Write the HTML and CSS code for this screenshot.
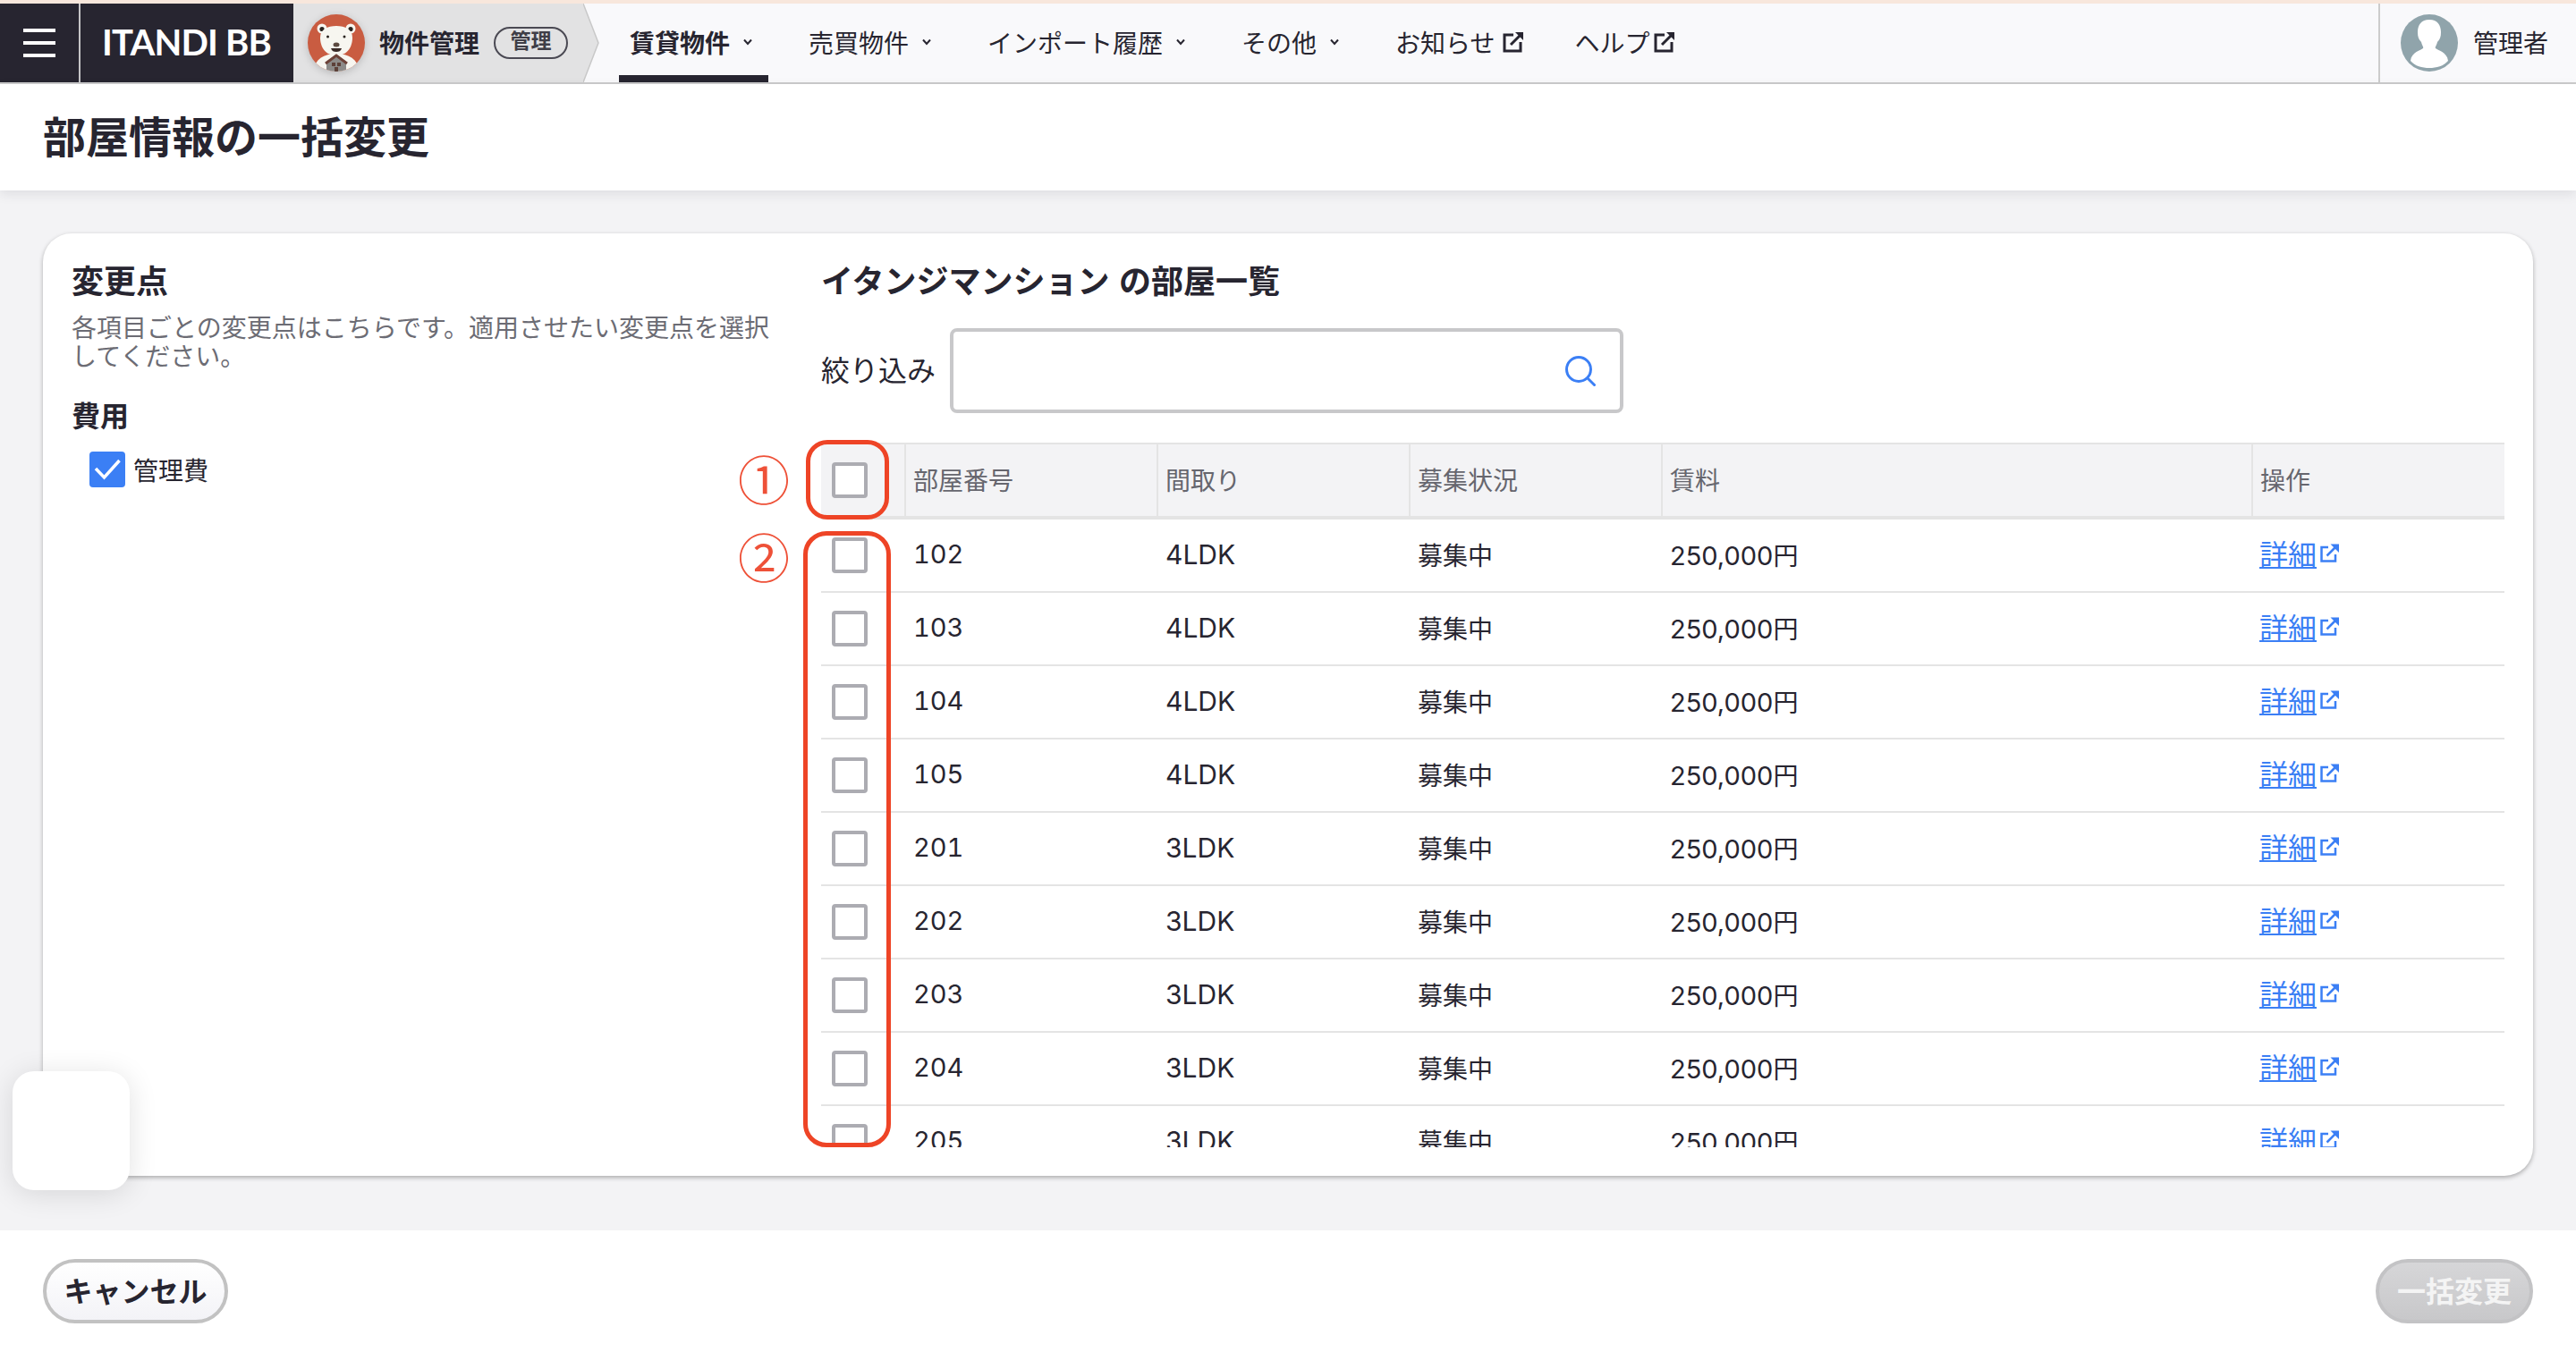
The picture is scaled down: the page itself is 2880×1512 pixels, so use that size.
FILE: index.html
```html
<!DOCTYPE html>
<html lang="ja">
<head>
<meta charset="utf-8">
<title>部屋情報の一括変更</title>
<link rel="stylesheet" href="styles.css">
</head>
<body>
<header class="topbar">
  <div class="brand">
    <button class="menu-btn" aria-label="menu"><span></span><span></span><span></span></button>
    <div class="logo">ITANDI BB</div>
  </div>
  <div class="product">
    <svg class="bear" viewBox="0 0 64 64">
      <defs><clipPath id="bc"><circle cx="32" cy="32" r="32"/></clipPath></defs>
      <g clip-path="url(#bc)">
        <rect width="64" height="64" fill="#c95c41"/>
        <path d="M6 64 C8 50 18 44 32 44 C46 44 56 50 58 64Z" fill="#f7f6f0"/>
        <circle cx="16" cy="16" r="5.5" fill="#f7f6f0"/>
        <circle cx="48" cy="16" r="5.5" fill="#f7f6f0"/>
        <circle cx="16" cy="16.500" r="2.600" fill="#2a2420"/>
        <circle cx="48" cy="16.500" r="2.600" fill="#2a2420"/>
        <path d="M14 26 C14 17 22 13 32 13 C42 13 50 17 50 26 C50 36 45 46 32 46 C19 46 14 36 14 26Z" fill="#f7f6f0"/>
        <circle cx="22.500" cy="25" r="1.500" fill="#2a2420"/>
        <circle cx="41" cy="25" r="1.500" fill="#2a2420"/>
        <ellipse cx="32" cy="34" rx="3.500" ry="2.500" fill="#5c4a40"/>
        <path d="M26 38 H38 C37 41 35 42 32 42 C29 42 27 41 26 38Z" fill="#3a2a26"/>
        <path d="M21 53 L32 45 L43 53 V64 H21Z" fill="#8c8a88"/>
        <path d="M20 55 L32 46 L44 55" fill="none" stroke="#6d4238" stroke-width="3"/>
        <rect x="27" y="54" width="4" height="4" fill="#5c4038"/>
        <rect x="33" y="54" width="4" height="4" fill="#5c4038"/>
        <rect x="30" y="59" width="4" height="5" fill="#5c4038"/>
      </g>
    </svg>
    <span class="product-name">物件管理</span>
    <span class="role-badge">管理</span>
    <svg class="product-tip" viewBox="0 0 18 88" preserveAspectRatio="none"><path d="M0 0 L17 44 L0 88Z" fill="#e2e2e3"/><path d="M0 0 L17 44 L0 88" fill="none" stroke="#c8c8c8" stroke-width="1.500"/></svg>
  </div>
  <nav class="nav">
    <a class="nav-item active">賃貸物件<svg class="caret" viewBox="0 0 10 8"><path d="M1 1.500 L5 6 L9 1.500" fill="none" stroke="currentColor" stroke-width="2"/></svg></a>
    <a class="nav-item">売買物件<svg class="caret" viewBox="0 0 10 8"><path d="M1 1.500 L5 6 L9 1.500" fill="none" stroke="currentColor" stroke-width="2"/></svg></a>
    <a class="nav-item">インポート履歴<svg class="caret" viewBox="0 0 10 8"><path d="M1 1.500 L5 6 L9 1.500" fill="none" stroke="currentColor" stroke-width="2"/></svg></a>
    <a class="nav-item">その他<svg class="caret" viewBox="0 0 10 8"><path d="M1 1.500 L5 6 L9 1.500" fill="none" stroke="currentColor" stroke-width="2"/></svg></a>
    <a class="nav-item">お知らせ<svg class="ext-nav" viewBox="0 0 24 24"><path d="M12 4 H2 V22 H20 V12" fill="none" stroke="currentColor" stroke-width="3"/><path d="M9 15 L20 4" fill="none" stroke="currentColor" stroke-width="3"/><path d="M14 1 H23 V10Z" fill="currentColor"/></svg></a>
    <a class="nav-item nav-help">ヘルプ<svg class="ext-nav" viewBox="0 0 24 24"><path d="M12 4 H2 V22 H20 V12" fill="none" stroke="currentColor" stroke-width="3"/><path d="M9 15 L20 4" fill="none" stroke="currentColor" stroke-width="3"/><path d="M14 1 H23 V10Z" fill="currentColor"/></svg></a>
  </nav>
  <div class="user">
    <svg class="avatar" viewBox="0 0 64 64">
      <defs><clipPath id="ac"><circle cx="32" cy="32" r="32"/></clipPath></defs>
      <g clip-path="url(#ac)">
        <rect width="64" height="64" fill="#90a4ab"/>
        <path d="M32 6 C23 6 19 12 19 20 C19 25 20 28 23 31 C24 35 26 37 25 38 C23 40 12 42 11 52 C16 58 24 60 32 60 C40 60 48 58 53 52 C52 42 41 40 39 38 C38 37 40 35 41 31 C44 28 45 25 45 20 C45 12 41 6 32 6Z" fill="#fff"/>
      </g>
    </svg>
    <span class="user-name">管理者</span>
  </div>
</header>

<section class="page-title"><h1>部屋情報の一括変更</h1></section>

<main class="main">
  <div class="card">
    <aside class="changes">
      <h2 class="heading">変更点</h2>
      <p class="desc">各項目ごとの変更点はこちらです。適用させたい変更点を選択してください。</p>
      <h3 class="group">費用</h3>
      <label class="option">
        <span class="check-on"><svg viewBox="0 0 40 40"><path d="M7 19 L16.500 29 L33.500 10" fill="none" stroke="#fff" stroke-width="3.500"/></svg></span>
        管理費
      </label>
    </aside>
    <section class="rooms">
      <h2 class="heading">イタンジマンション の部屋一覧</h2>
      <div class="filter">
        <span class="filter-label">絞り込み</span>
        <div class="search">
          <svg class="search-icon" viewBox="0 0 34 34"><circle cx="15" cy="15" r="13.500" fill="none" stroke="#3b7ff5" stroke-width="3"/><path d="M25 25 L32.500 32.500" stroke="#3b7ff5" stroke-width="3" stroke-linecap="round"/></svg>
        </div>
      </div>
      <div class="table-area">
        <div class="table-scroll">
          <table class="table">
            <colgroup><col class="c0"><col class="c1"><col class="c1"><col class="c1"><col class="c4"><col class="c5"></colgroup>
            <thead>
              <tr><th class="cb"><span class="box"></span></th><th>部屋番号</th><th>間取り</th><th>募集状況</th><th>賃料</th><th>操作</th></tr>
            </thead>
            <tbody id="rows"></tbody>
          </table>
        </div>
        <span class="mark mark-1">①</span>
        <span class="mark mark-2">②</span>
        <span class="outline outline-1"></span>
        <span class="outline outline-2"></span>
      </div>
    </section>
  </div>
</main>

<footer class="footer">
  <button class="btn btn-cancel">キャンセル</button>
  <button class="btn btn-submit" disabled>一括変更</button>
</footer>

<div class="floating"></div>

<script src="app.js"></script>
</body>
</html>
```

FILE: app.js
```js
var rooms = [
  ["102", "4LDK"], ["103", "4LDK"], ["104", "4LDK"], ["105", "4LDK"],
  ["201", "3LDK"], ["202", "3LDK"], ["203", "3LDK"], ["204", "3LDK"], ["205", "3LDK"]
];
var icon = '<svg class="ext-link" viewBox="0 0 21 21"><path d="M9 4 H1.500 V19.500 H17 V12" fill="none" stroke="currentColor" stroke-width="2.500"/><path d="M7.500 13.500 L16.500 4.500" fill="none" stroke="currentColor" stroke-width="2.500"/><path d="M11.500 0.500 H21 V10Z" fill="currentColor"/></svg>';
document.getElementById("rows").innerHTML = rooms.map(function (r) {
  return '<tr><td class="cb"><span class="box"></span></td><td class="text"><span class="room">' + r[0] + '</span></td><td class="text"><span class="latin">' + r[1] +
    '</span></td><td class="text">募集中</td><td class="text"><span class="rent">250,000</span>円</td><td class="link-cell"><a class="detail"><span class="detail-text">詳細</span>' + icon + '</a></td></tr>';
}).join("");
```

FILE: styles.css
```css
* { box-sizing: border-box; }
html, body { margin: 0; padding: 0; }
body {
  width: 2880px;
  height: 1512px;
  overflow: hidden;
  position: relative;
  display: flex;
  flex-direction: column;
  background: #fff;
  color: #272530;
  font-family: Inter, "Noto Sans CJK JP", sans-serif;
  font-size: 28px;
}
h1, h2, h3, p { margin: 0; }

/* top bar */
.topbar {
  flex: none;
  height: 94px;
  display: flex;
  background: #f9f9fb;
  border-top: 4px solid #f8e7dc;
  border-bottom: 2px solid #cccccc;
}
.brand {
  width: 328px;
  display: flex;
  background: #272530;
  color: #fff;
}
.menu-btn {
  width: 90px;
  padding: 0 0 0 26px;
  border: 0;
  border-right: 2px solid #c4c4c6;
  background: none;
  display: flex;
  flex-direction: column;
  justify-content: center;
  gap: 10px;
}
.menu-btn span { display: block; width: 36px; height: 4px; background: #fff; }
.logo {
  padding-left: 24px;
  font-family: Lato, sans-serif;
  font-size: 40px;
  font-weight: 700;
  line-height: 86px;
  letter-spacing: -0.8px;
  white-space: nowrap;
}
.product {
  width: 324px;
  position: relative;
  display: flex;
  align-items: center;
  padding-left: 16px;
  background: #e2e2e3;
}
.bear { width: 64px; height: 64px; flex: none; filter: drop-shadow(0 2px 4px rgba(0,0,0,.18)); }
.product-name { margin-left: 16px; font-weight: 700; white-space: nowrap; padding-bottom: 2px; }
.role-badge {
  margin-left: 16px;
  width: 83px;
  height: 36px;
  border: 2px solid #4a4953;
  border-radius: 18px;
  font-size: 23px;
  font-weight: 700;
  line-height: 29px;
  text-align: center;
  color: #3f3e47;
  white-space: nowrap;
}
.product-tip { position: absolute; left: 100%; top: 0; width: 18px; height: 88px; }
.nav {
  flex: 1;
  display: flex;
  padding-left: 40px;
}
.nav-item {
  display: flex;
  align-items: center;
  height: 88px;
  padding: 0 12px 2px;
  margin-right: 33px;
  white-space: nowrap;
}
.nav-item.active { font-weight: 700; border-bottom: 8px solid #272530; padding-top: 6px; padding-bottom: 0; }
.caret { width: 10px; height: 8px; margin-left: 15px; margin-right: 6px; }
.ext-nav { width: 24px; height: 24px; margin-left: 8px; }
.nav-help .ext-nav { margin-left: 4px; }
.user {
  width: 221px;
  display: flex;
  align-items: center;
  padding-left: 23px;
  border-left: 2px solid #cccccc;
}
.avatar { width: 64px; height: 64px; flex: none; }
.user-name { margin-left: 17px; white-space: nowrap; padding-bottom: 2px; }

/* title */
.page-title {
  flex: none;
  height: 119px;
  padding: 0 0 0 48px;
  display: flex;
  align-items: center;
  background: #fff;
  box-shadow: 0 4px 12px rgba(40,40,60,.1);
  position: relative;
  z-index: 1;
}
.page-title h1 { font-size: 48px; font-weight: 700; line-height: 64px; }

/* main */
.main {
  flex: 1;
  min-height: 0;
  padding: 48px 48px 61px;
  background: #f3f3f5;
}
.card {
  height: 100%;
  display: flex;
  gap: 38px;
  padding: 34px 32px 0;
  background: #fff;
  border-radius: 32px;
  box-shadow: 0 2px 5px rgba(0,0,0,.3);
}
.changes { width: 800px; flex: none; }
.rooms { flex: 1; min-width: 0; }
.heading { font-size: 36px; font-weight: 700; line-height: 40px; white-space: nowrap; word-spacing: 2px; }
.desc { margin-top: 16px; color: #6c6c74; line-height: 32px; }
.group { margin-top: 31px; font-size: 32px; font-weight: 700; line-height: 40px; }
.option { display: flex; align-items: center; gap: 9px; margin: 19px 0 0 20px; height: 40px; white-space: nowrap; }
.check-on { width: 40px; height: 40px; border-radius: 4px; background: #3b7ff5; }
.check-on svg { display: block; width: 40px; height: 40px; }

/* filter */
.filter { display: flex; align-items: center; gap: 16px; margin-top: 32px; }
.filter-label { font-size: 32px; white-space: nowrap; padding-bottom: 5px; }
.search {
  width: 753px;
  height: 95px;
  display: flex;
  align-items: center;
  justify-content: flex-end;
  padding-right: 27px;
  border: 4px solid #c8c8ca;
  border-radius: 8px;
  background: #fff;
}
.search-icon { width: 34px; height: 34px; }

/* table */
.table-area { position: relative; margin-top: 33px; }
.table-scroll { height: 788px; overflow: hidden; }
.table { width: 1882px; border-collapse: separate; border-spacing: 0; table-layout: fixed; }
.c0 { width: 93px; }
.c1 { width: 282px; }
.c4 { width: 660px; }
.c5 { width: 283px; }
.table th {
  height: 86px;
  padding: 0 0 2px 8px;
  background: #f3f3f5;
  border-top: 2px solid #e4e4e4;
  border-bottom: 4px solid #e4e4e4;
  border-left: 2px solid #e4e4e4;
  color: #66666e;
  font-weight: 400;
  text-align: left;
}
.table th.cb { border-left: 0; }
.table td {
  height: 82px;
  padding: 0 0 0 10px;
  border-bottom: 2px solid #e4e4e4;
}
.table td.text { padding-bottom: 3px; }
.table td.link-cell { padding-left: 9px; }
.latin { font-size: 30px; }
.room { font-size: 29px; font-variant-numeric: tabular-nums; }
.rent { font-size: 29px; }
.table th.cb, .table td.cb { padding: 0 0 0 12px; }
.box {
  display: block;
  width: 40px;
  height: 40px;
  border: 4px solid #acacb2;
  border-radius: 4px;
  background: #fff;
}
.detail { display: inline-flex; align-items: center; color: #3b7ff5; font-size: 32px; line-height: 40px; }
.detail-text { text-decoration: underline; text-decoration-thickness: 2px; text-underline-offset: 2px; }
.ext-link { width: 21px; height: 21px; margin: -5px 0 0 4px; }

/* annotations */
.outline { position: absolute; border: 5px solid #ee4426; pointer-events: none; }
.outline-1 { left: -17px; top: -3px; width: 93px; height: 89px; border-radius: 24px; }
.outline-2 { left: -20px; top: 99px; width: 98px; height: 689px; border-radius: 26px; }
.mark { position: absolute; left: -94px; width: 60px; text-align: center; color: #ee5138; font-size: 58px; line-height: 60px; font-weight: 400; font-family: "Noto Sans CJK JP", sans-serif; }
.mark-1 { top: 9px; }
.mark-2 { top: 96px; }

/* footer */
.footer {
  flex: none;
  height: 136px;
  padding: 32px 48px;
  display: flex;
  justify-content: space-between;
  background: #fff;
}
.btn {
  height: 72px;
  border-radius: 36px;
  font-family: inherit;
  font-size: 32px;
  font-weight: 700;
  padding: 0 0 4px;
}
.btn-cancel {
  width: 207px;
  border: 4px solid #c2c2c2;
  background: linear-gradient(#ffffff, #f3f3f7);
  color: #272530;
}
.btn-submit {
  width: 176px;
  border: 4px solid #c3c3c5;
  background: linear-gradient(#d6d6d8, #c8c8ca);
  color: #f4f4f4;
}

.floating {
  position: absolute;
  left: 14px;
  top: 1198px;
  width: 131px;
  height: 133px;
  border-radius: 24px;
  background: #fff;
  box-shadow: 0 4px 32px rgba(0,0,0,.12);
  z-index: 3;
}
```
